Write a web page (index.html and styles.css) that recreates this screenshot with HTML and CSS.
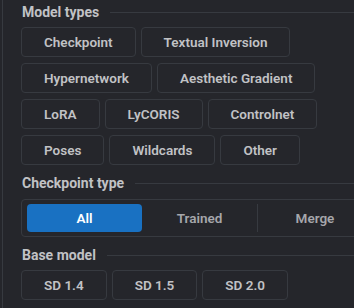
FILE: index.html
```html
<!DOCTYPE html>
<html lang="en">
<head>
    <meta charset="UTF-8">
    <meta name="viewport" content="width=device-width, initial-scale=1.0">
    <title>Model filters</title>
    <link rel="stylesheet" href="styles.css">
</head>
<body>
    <div class="filter-panel">
        <div class="section">
            <div class="divider-label"><span>Model types</span></div>
            <div class="chip-group">
                <button class="chip">Checkpoint</button>
                <button class="chip">Textual Inversion</button>
                <button class="chip">Hypernetwork</button>
                <button class="chip">Aesthetic Gradient</button>
                <button class="chip">LoRA</button>
                <button class="chip">LyCORIS</button>
                <button class="chip">Controlnet</button>
                <button class="chip">Poses</button>
                <button class="chip">Wildcards</button>
                <button class="chip">Other</button>
            </div>
        </div>

        <div class="section">
            <div class="divider-label"><span>Checkpoint type</span></div>
            <div class="segmented">
                <button class="segment active">All</button>
                <button class="segment">Trained</button>
                <button class="segment sep">Merge</button>
            </div>
        </div>

        <div class="section">
            <div class="divider-label"><span>Base model</span></div>
            <div class="chip-group">
                <button class="chip">SD 1.4</button>
                <button class="chip">SD 1.5</button>
                <button class="chip">SD 2.0</button>
            </div>
        </div>
    </div>
</body>
</html>
```

FILE: styles.css
```css
body {
    margin: 0;
    padding: 0;
    background-color: #25262b;
    font-family: Roboto, 'Liberation Sans', sans-serif;
    color: #c1c2c5;
    overflow: hidden;
}

.filter-panel {
    width: 420px;
    margin-left: 2px;
    border-left: 1px solid #373a40;
    padding: 1px 0 0 18px;
    min-height: 308px;
}

.section {
    display: flex;
    flex-direction: column;
    gap: 4px;
    margin-bottom: 7px;
}

.divider-label {
    display: flex;
    align-items: center;
    height: 22px;
    font-size: 14px;
    font-weight: 700;
    color: #c1c2c5;
    padding-left: 1px;
}

.divider-label::after {
    content: '';
    flex: 1;
    height: 1px;
    background-color: #373a40;
    margin-left: 11px;
}

.chip-group {
    display: flex;
    flex-wrap: wrap;
    gap: 6px 5px;
    width: 305px;
}

.chip {
    height: 30px;
    padding: 0 22px;
    border: 1px solid #373a40;
    border-radius: 4px;
    background-color: #25262b;
    color: #c1c2c5;
    font-family: inherit;
    font-size: 13.5px;
    font-weight: 600;
    cursor: pointer;
}

.segmented {
    display: flex;
    width: 352px;
    padding: 4px 5px;
    border: 1px solid #373a40;
    border-radius: 4px;
    margin-top: 1px;
}

.segment {
    position: relative;
    width: 115px;
    height: 28px;
    border: none;
    border-radius: 4px;
    background: none;
    color: #a6a7ab;
    font-family: inherit;
    font-size: 13.5px;
    font-weight: 600;
    cursor: pointer;
}

.segment.active {
    background-color: #1971c2;
    color: #fff;
}

.segment.sep {
    border-left: 1px solid #373a40;
    border-radius: 0;
}
```
